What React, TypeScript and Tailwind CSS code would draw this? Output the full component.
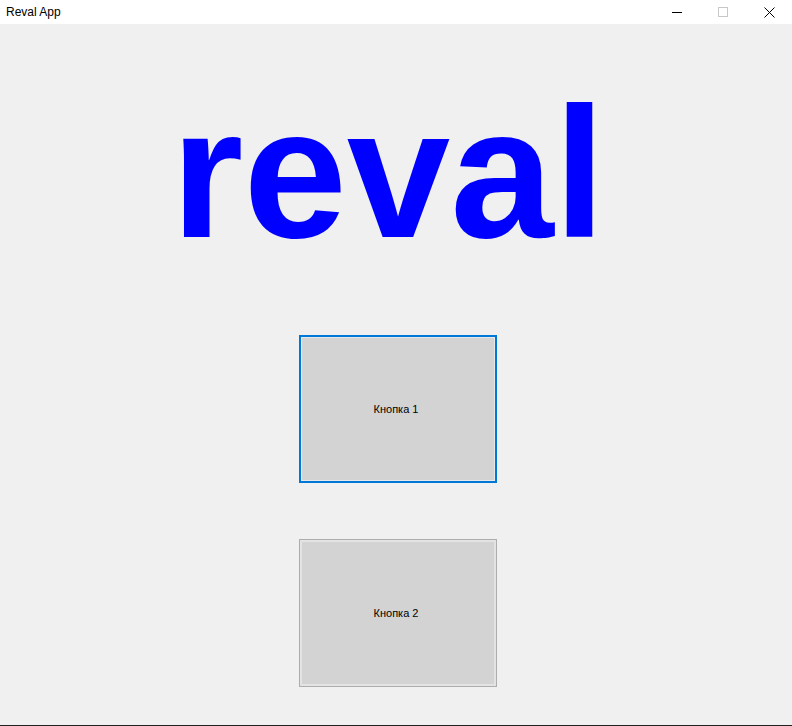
import React from "react";

export default function App() {
  return (
    <div className="w-[792px] h-[726px] flex flex-col bg-[#f0f0f0] overflow-hidden" style={{ fontFamily: '"Liberation Sans", Arial, sans-serif' }}>
      <div className="h-[24px] bg-white flex items-center justify-between shrink-0">
        <span className="pl-[6px] text-[12px] text-black leading-none" style={{ fontFamily: '"Liberation Sans", Arial, sans-serif' }}>Reval App</span>
        <div className="flex h-full">
          <div className="w-[46px] h-full flex items-center justify-center">
            <svg width="10" height="10" viewBox="0 0 10 10"><line x1="0" y1="5.5" x2="10" y2="5.5" stroke="#000" strokeWidth="1" /></svg>
          </div>
          <div className="w-[46px] h-full flex items-center justify-center">
            <svg width="10" height="10" viewBox="0 0 10 10"><rect x="0.5" y="0.5" width="9" height="9" fill="none" stroke="#c8c8c8" strokeWidth="1" /></svg>
          </div>
          <div className="w-[46px] h-full flex items-center justify-center">
            <svg width="11" height="11" viewBox="0 0 11 11"><path d="M0.5 0.5 L10.5 10.5 M10.5 0.5 L0.5 10.5" stroke="#000" strokeWidth="1" fill="none" /></svg>
          </div>
        </div>
      </div>
      <div className="flex-1 flex flex-col border-b border-[#202020]">
        <div className="pl-[171px] pt-[57px] h-[242px]">
          <div className="text-[186px] leading-[184px] font-bold text-[#0000ff]" style={{ fontFamily: '"Liberation Sans", Arial, sans-serif' }}>reval</div>
        </div>
        <div className="pl-[299px] pt-[69px] flex flex-col gap-[56px]">
          <button className="w-[198px] h-[148px] bg-[#d3d3d3] border-2 border-[#0078d7] flex items-center justify-center text-[11px] text-black p-0">
            <div className="w-full h-full border border-[#e8e8e8] flex items-center justify-center pr-[4px]">Кнопка 1</div>
          </button>
          <button className="w-[198px] h-[148px] bg-[#d3d3d3] border border-[#adadad] flex items-center justify-center text-[11px] text-black p-0">
            <div className="w-full h-full border-2 border-[#e3e3e3] flex items-center justify-center pr-[4px]">Кнопка 2</div>
          </button>
        </div>
      </div>
    </div>
  );
}
